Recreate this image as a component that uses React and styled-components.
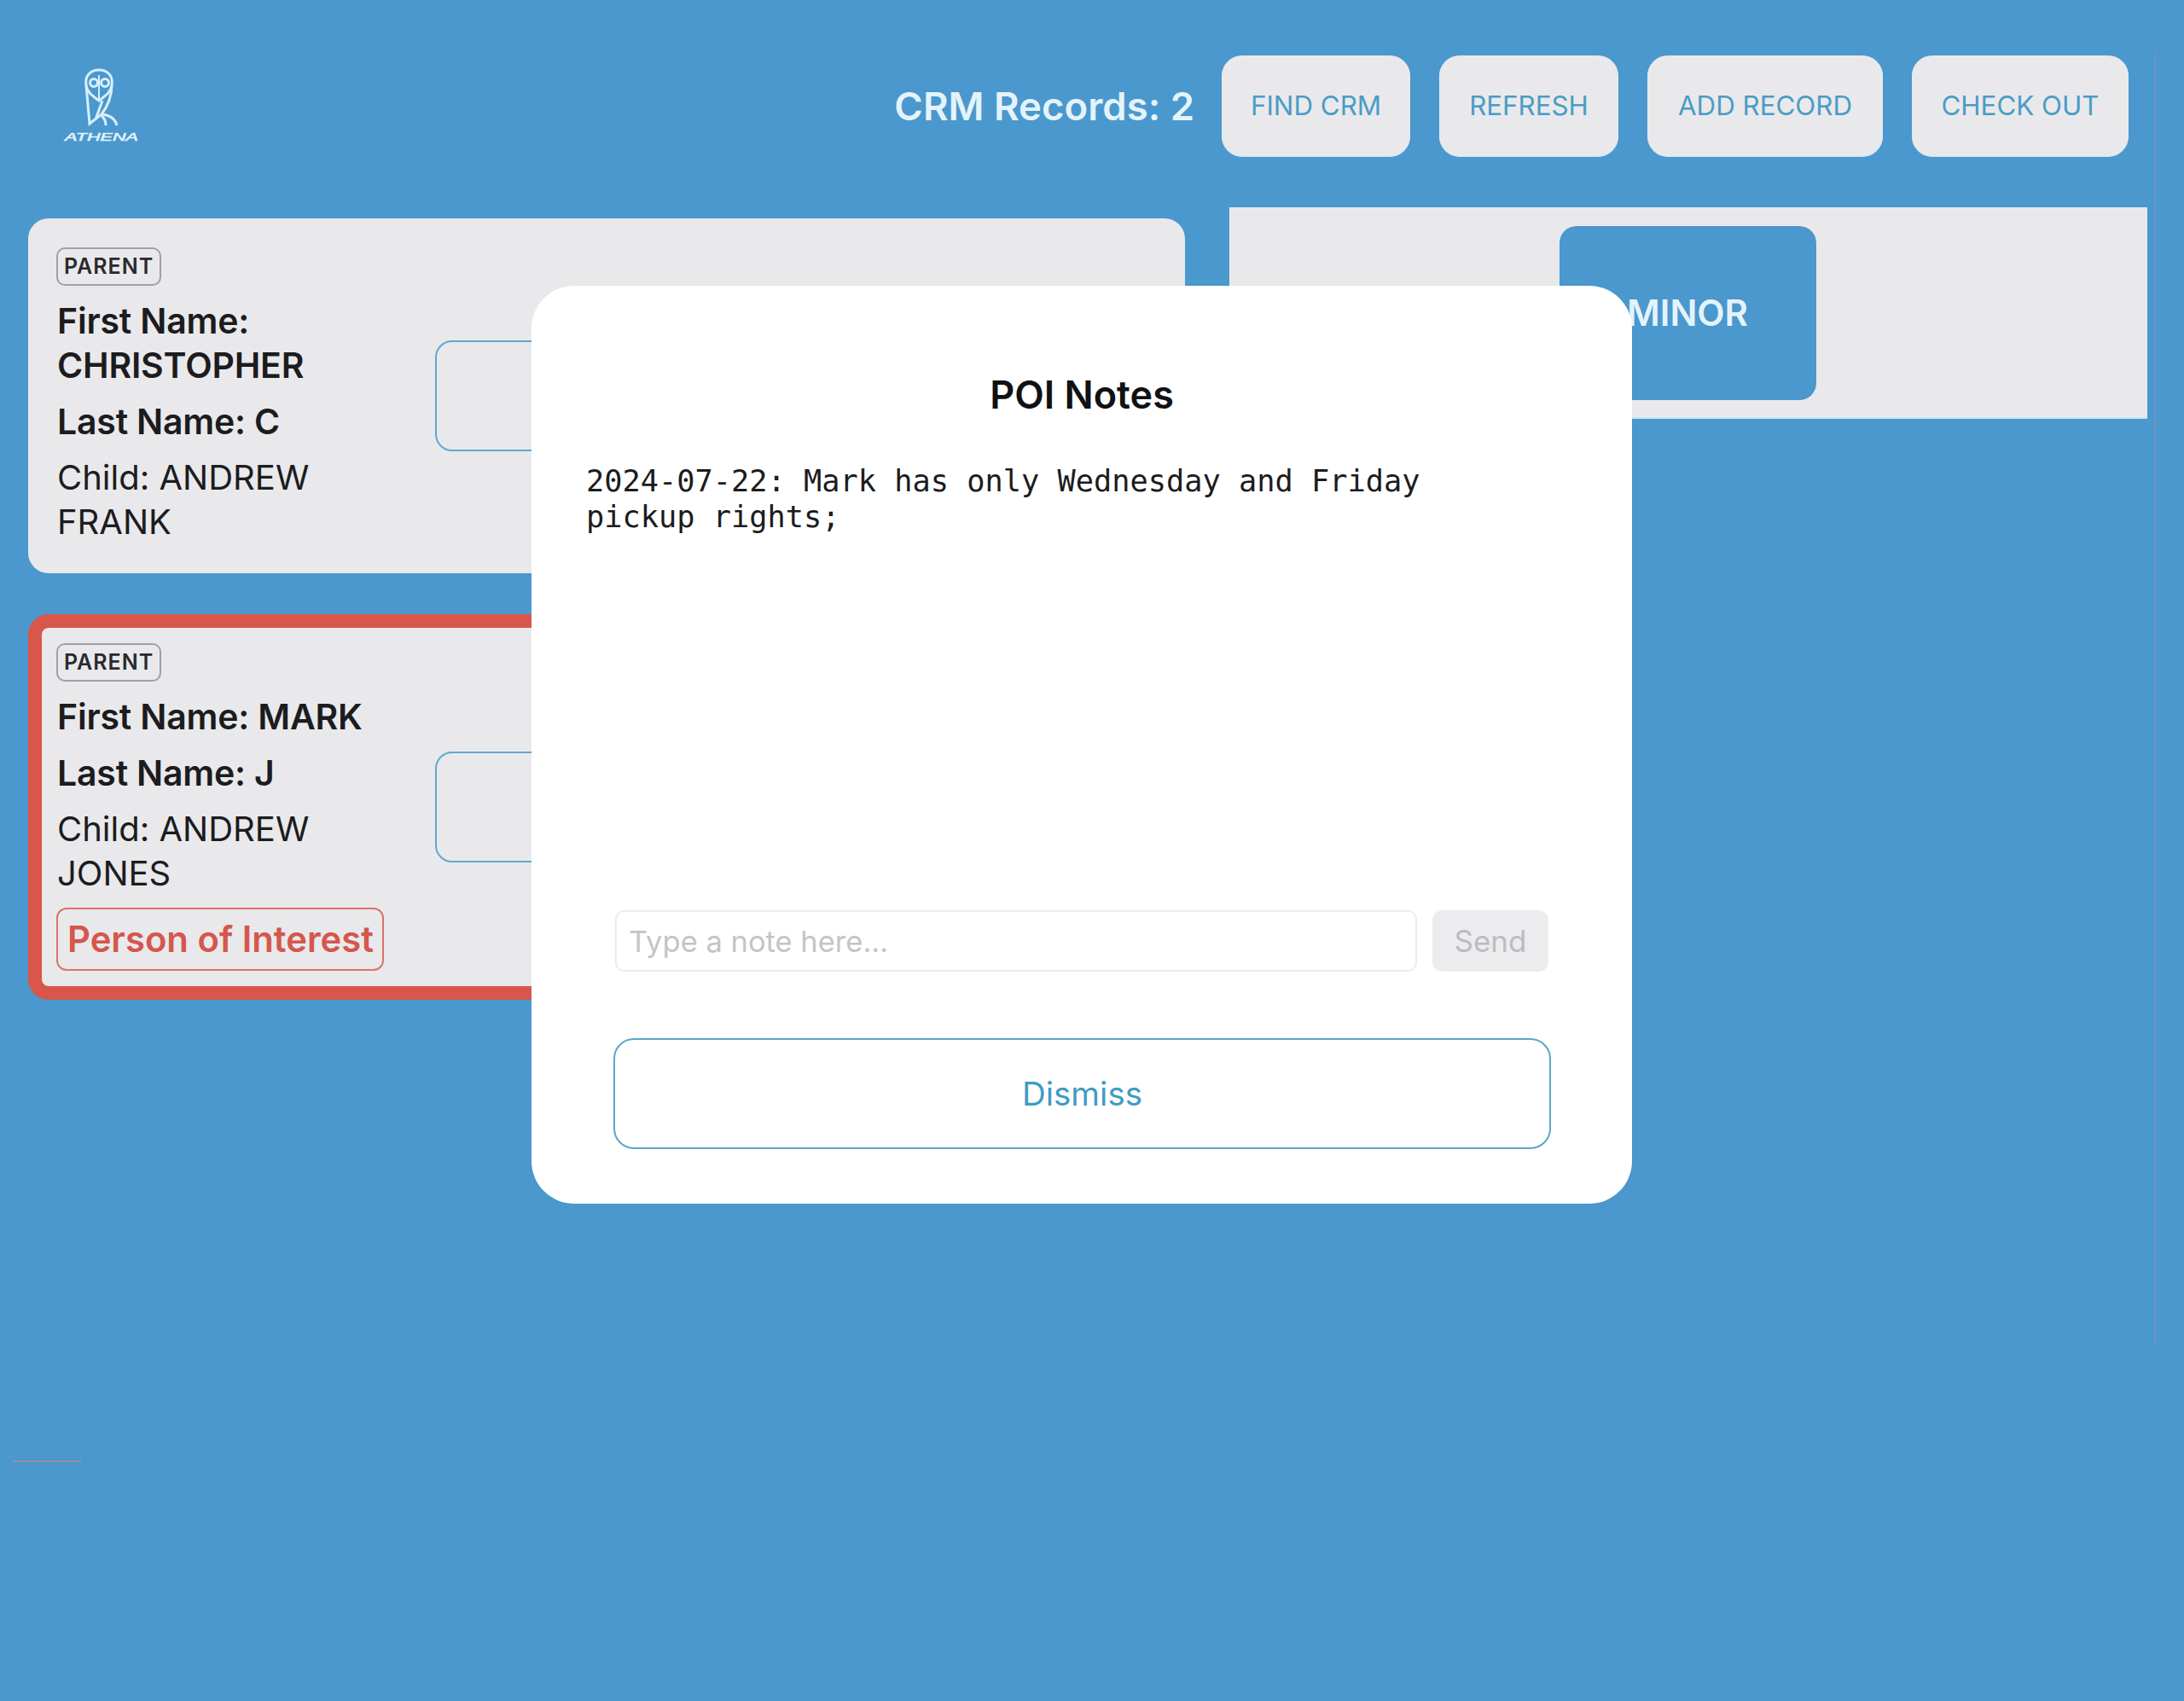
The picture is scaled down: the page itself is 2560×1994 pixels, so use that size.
import styled, { createGlobalStyle } from 'styled-components';

const GlobalStyle = createGlobalStyle`
  html, body {
    margin: 0;
    padding: 0;
    background: #4a98cd;
  }
  * {
    box-sizing: border-box;
  }
`;

const Page = styled.div`
  position: relative;
  width: 2560px;
  height: 1994px;
  overflow: hidden;
  padding-top: 65px;
  background: #4a98cd;
  font-family: Inter, "Liberation Sans", sans-serif;
  color: #1c1c1e;
  /* stray capture lines in the source */
  &::before {
    content: '';
    position: absolute;
    left: 2525px;
    top: 60px;
    width: 2px;
    height: 1515px;
    background: #7f8fc0;
    opacity: 0.6;
  }
  &::after {
    content: '';
    position: absolute;
    left: 15px;
    top: 1712px;
    width: 81px;
    height: 2px;
    background: #a08a9f;
  }
`;

const Header = styled.header`
  display: flex;
  align-items: center;
  gap: 34px;
  height: 118px;
  padding-right: 65px;
`;

const LogoWrap = styled.div`
  width: 200px;
  height: 140px;
  margin: -8px auto 0 40px;
  flex: none;
`;

const RecordCount = styled.div`
  font-size: 45.5px;
  font-weight: 600;
  color: #e4f3fb;
  margin-right: -2px;
`;

const HeaderButton = styled.button`
  height: 118px;
  width: ${(p) => p.$w}px;
  border: none;
  border-radius: 24px;
  background: #e9e9ec;
  box-shadow: 0 1px 0 #c8e6f7;
  color: #4a9cc6;
  font-family: inherit;
  font-size: 31.3px;
  font-weight: 400;
  padding: 0;
`;

const Content = styled.main`
  display: flex;
  align-items: flex-start;
  gap: 52px;
  padding-left: 33px;
  margin-top: 60px;
`;

const CardColumn = styled.div`
  display: flex;
  flex-direction: column;
  gap: 48px;
  width: 1356px;
  margin-top: 13px;
`;

const Card = styled.section`
  display: flex;
  align-items: center;
  width: 100%;
  background: #e9e9ec;
  border-radius: 24px;
  border: ${(p) => (p.$flagged ? '16px solid #d9574a' : 'none')};
  padding: ${(p) => (p.$flagged ? '18px 18px' : '34px 34px')};
`;

const Details = styled.div`
  display: flex;
  flex-direction: column;
  align-items: flex-start;
  gap: 14px;
  width: 443px;
  flex: none;
`;

const RoleTag = styled.span`
  display: inline-block;
  height: 45px;
  line-height: 41px;
  margin-left: -1px;
  margin-bottom: 1px;
  padding: 0 7px;
  border: 2px solid #a0a0a6;
  border-radius: 10px;
  font-size: 25px;
  font-weight: 600;
  letter-spacing: 1px;
  color: #2a2a2e;
`;

const Field = styled.div`
  max-width: 380px;
  font-size: ${(p) => (p.$bold ? 41 : 40)}px;
  line-height: 52px;
  font-weight: ${(p) => (p.$bold ? 600 : 400)};
  letter-spacing: ${(p) => (p.$bold ? '-0.2px' : '0')};
  color: #1c1c1e;
`;

const PoiBadge = styled.div`
  height: 74px;
  line-height: 70px;
  width: 384px;
  margin-left: -1px;
  padding-left: 11px;
  border: 2px solid #d9746a;
  border-radius: 12px;
  color: #d4574c;
  font-size: 41.8px;
  font-weight: 600;
  white-space: nowrap;
`;

const OutlineAction = styled.div`
  width: 260px;
  height: 130px;
  border: 2px solid #62a8cf;
  border-radius: 20px;
  flex: none;
`;

const MinorPanel = styled.aside`
  display: flex;
  align-items: flex-start;
  justify-content: center;
  width: 1076px;
  height: 246px;
  padding-top: 22px;
  background: #e9e9ec;
  box-shadow: 0 2px 0 #c8e6f7;
`;

const MinorButton = styled.div`
  display: flex;
  align-items: center;
  justify-content: center;
  width: 301px;
  height: 204px;
  margin-left: -2px;
  padding-bottom: 2px;
  border-radius: 20px;
  background: #4a98cd;
  color: #e4f3fb;
  font-size: 42px;
  font-weight: 600;
`;

const Modal = styled.div`
  position: absolute;
  left: 623px;
  top: 335px;
  width: 1290px;
  height: 1076px;
  display: flex;
  flex-direction: column;
  background: #fff;
  border-radius: 50px;
  padding: 0 64px 64px;
`;

const ModalTitle = styled.h2`
  margin: 98px 0 0;
  font-size: 45px;
  line-height: 60px;
  font-weight: 600;
  text-align: center;
  color: #111114;
`;

const Notes = styled.div`
  flex: 1;
  max-width: 1100px;
  margin-top: 50px;
  font-family: "DejaVu Sans Mono", "Liberation Mono", monospace;
  font-size: 35.3px;
  line-height: 42px;
  color: #1c1c1e;
`;

const Composer = styled.div`
  display: flex;
  gap: 18px;
  padding: 0 34px;
  margin-bottom: 78px;
`;

const NoteInput = styled.input`
  flex: 1;
  min-width: 0;
  height: 72px;
  padding: 0 14px;
  border: 2px solid #ececef;
  border-radius: 10px;
  background: #fff;
  font-family: inherit;
  font-size: 34.5px;
  outline: none;
  &::placeholder {
    color: #c4c4c8;
    opacity: 1;
  }
`;

const SendButton = styled.button`
  width: 136px;
  height: 72px;
  border: none;
  border-radius: 12px;
  background: #ececee;
  color: #bcbcc0;
  font-family: inherit;
  font-size: 35px;
  padding: 0;
`;

const DismissButton = styled.button`
  display: block;
  width: 1099px;
  height: 130px;
  margin-left: 32px;
  border: 2px solid #5aa8c4;
  border-radius: 24px;
  background: #fff;
  color: #3f9cc4;
  font-family: inherit;
  font-size: 38.5px;
  padding: 0;
`;

function OwlLogo() {
  return (
    <svg width="200" height="140" viewBox="0 0 200 140" fill="none" stroke="#d6effb" strokeWidth="3">
      <path d="M61 50C59 38 67 32 76 32C85 32 93 38 91 50C90 58 84 62 76 68C68 62 62 58 61 50Z" />
      <path d="M76 38V66" strokeWidth="2" />
      <circle cx="70" cy="47" r="4.5" />
      <circle cx="83" cy="47" r="4.5" />
      <path d="M61 50L65 95L79 84C85 76 91 66 91 50" />
      <path d="M80 68L72 90" />
      <path d="M78 84C86 84 95 88 97 97" />
      <path d="M84 97C84 92 82 88 79 86" />
      <text
        x="36"
        y="115"
        textLength="86"
        lengthAdjust="spacingAndGlyphs"
        fill="#e4f3fb"
        stroke="#e4f3fb"
        strokeWidth="0.5"
        fontFamily="Liberation Sans, sans-serif"
        fontStyle="italic"
        fontSize="13"
      >
        ATHENA
      </text>
    </svg>
  );
}

export default function App() {
  return (
    <Page>
      <GlobalStyle />
      <Header>
        <LogoWrap>
          <OwlLogo />
        </LogoWrap>
        <RecordCount>CRM Records: 2</RecordCount>
        <HeaderButton $w={221}>FIND CRM</HeaderButton>
        <HeaderButton $w={210}>REFRESH</HeaderButton>
        <HeaderButton $w={276}>ADD RECORD</HeaderButton>
        <HeaderButton $w={254}>CHECK OUT</HeaderButton>
      </Header>
      <Content>
        <CardColumn>
          <Card>
            <Details>
              <RoleTag>PARENT</RoleTag>
              <Field $bold>First Name: CHRISTOPHER</Field>
              <Field $bold>Last Name: C</Field>
              <Field>Child: ANDREW FRANK</Field>
            </Details>
            <OutlineAction />
          </Card>
          <Card $flagged>
            <Details>
              <RoleTag>PARENT</RoleTag>
              <Field $bold>First Name: MARK</Field>
              <Field $bold>Last Name: J</Field>
              <Field>Child: ANDREW JONES</Field>
              <PoiBadge>Person of Interest</PoiBadge>
            </Details>
            <OutlineAction />
          </Card>
        </CardColumn>
        <MinorPanel>
          <MinorButton>MINOR</MinorButton>
        </MinorPanel>
      </Content>
      <Modal>
        <ModalTitle>POI Notes</ModalTitle>
        <Notes>2024-07-22: Mark has only Wednesday and Friday pickup rights;</Notes>
        <Composer>
          <NoteInput placeholder="Type a note here..." readOnly />
          <SendButton>Send</SendButton>
        </Composer>
        <DismissButton>Dismiss</DismissButton>
      </Modal>
    </Page>
  );
}
